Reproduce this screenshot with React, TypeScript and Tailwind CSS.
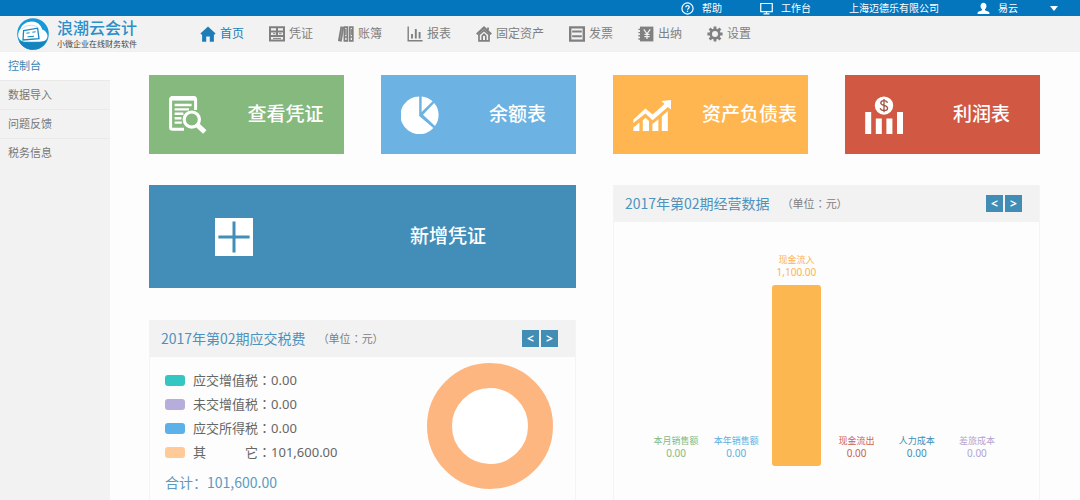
import type { ReactNode } from "react";

type IconProps = { className?: string };

const HomeIcon = ({ className }: IconProps) => (
  <svg viewBox="0 0 16 16" className={className} fill="currentColor" aria-hidden="true">
    <path d="M8 0.4 15.6 7.4 14.2 8.7 13.9 8.5V15.8H9.8V10.6H6.2V15.8H2.1V8.5L1.8 8.7 0.4 7.4Z" />
  </svg>
);

const VoucherIcon = ({ className }: IconProps) => (
  <svg viewBox="0 0 16 16" className={className} fill="none" stroke="currentColor" strokeWidth="2" aria-hidden="true">
    <path d="M1 1.2H15V14.6H1ZM1 5.4H15M1 10H15M8 1.2V9.8" />
    <path d="M4 7.7H6.4M10 7.7H12.6M4 12.4H12" strokeWidth="1" />
  </svg>
);

const BooksIcon = ({ className }: IconProps) => (
  <svg viewBox="0 0 16 16" className={className} fill="none" stroke="currentColor" strokeWidth="1.7" aria-hidden="true">
    <path d="M3.2 1.2 5.2 1.7 3 14.8 0.9 14.3Z" fill="currentColor" fillOpacity="0.6" />
    <path d="M6.4 1.2H9.4V14.8H6.4ZM11.8 1.2H14.8V14.8H11.8Z" />
    <path d="M7.9 3V9M13.3 3V9" strokeWidth="1.2" />
    <path d="M6.4 11H9.2M11.8 11H14.8" />
  </svg>
);

const ReportIcon = ({ className }: IconProps) => (
  <svg viewBox="0 0 16 16" className={className} fill="none" stroke="currentColor" aria-hidden="true">
    <path d="M1.2 0.6V14.8H15.6" strokeWidth="1.4" />
    <path d="M5 8V12.6M8.8 3V12.6M12.6 6V12.6" strokeWidth="1.9" />
  </svg>
);

const AssetIcon = ({ className }: IconProps) => (
  <svg viewBox="0 0 16 16" className={className} fill="none" stroke="currentColor" aria-hidden="true">
    <path d="M0.8 8.2 8 1.6 15.2 8.2" strokeWidth="2.2" />
    <path d="M3 8.6V14.8H13V8.6L8 4.4Z" strokeWidth="1.7" />
    <path d="M6.2 14.6V10L8 8.2 9.8 10V14.6" strokeWidth="1.6" />
    <path d="M12 1.4V4" strokeWidth="1.8" />
  </svg>
);

const InvoiceIcon = ({ className }: IconProps) => (
  <svg viewBox="0 0 16 16" className={className} fill="none" stroke="currentColor" strokeWidth="2" aria-hidden="true">
    <path d="M1.2 1.4H14.8V14.6H1.2Z" strokeWidth="2.4" />
    <path d="M3.2 5.6H12.8M3.2 10.2H12.8" />
  </svg>
);

const CashierIcon = ({ className }: IconProps) => (
  <svg viewBox="0 0 16 16" className={className} aria-hidden="true">
    <path d="M2 0.6H15.4V15.4H2Z" fill="currentColor" />
    <path d="M0.4 3.4H3M0.4 6.6H3M0.4 9.8H3M0.4 13H3" stroke="currentColor" strokeWidth="1.4" />
    <path d="M5.8 3.4 9 7.8 12.2 3.4M9 7.8V13M6.4 8.4H11.6M6.4 10.6H11.6" fill="none" stroke="#f2f2f2" strokeWidth="1.2" />
  </svg>
);

const GearIcon = ({ className }: IconProps) => (
  <svg viewBox="0 0 16 16" className={className} fill="none" stroke="currentColor" aria-hidden="true">
    <circle cx="8" cy="8" r="4.3" strokeWidth="2.6" />
    <path
      d="M8 0.4V3.2M8 12.8V15.6M0.4 8H3.2M12.8 8H15.6M2.6 2.6 4.6 4.6M11.4 11.4 13.4 13.4M2.6 13.4 4.6 11.4M11.4 4.6 13.4 2.6"
      strokeWidth="2.8"
    />
  </svg>
);

const HelpIcon = ({ className }: IconProps) => (
  <svg viewBox="0 0 14 14" className={className} fill="none" stroke="currentColor" strokeWidth="1.3" aria-hidden="true">
    <circle cx="7" cy="7" r="6" />
    <path d="M5.2 5.6C5.2 3.2 8.9 3.3 8.9 5.5 8.9 6.9 7 6.9 7 8.4M7 9.5V10.8" />
  </svg>
);

const MonitorIcon = ({ className }: IconProps) => (
  <svg viewBox="0 0 14 14" className={className} fill="none" stroke="currentColor" strokeWidth="1.3" aria-hidden="true">
    <path d="M0.8 1.6H13.2V10.4H0.8Z" />
    <path d="M7 10.4V12.4M3.8 12.8H10.2" />
  </svg>
);

const UserIcon = ({ className }: IconProps) => (
  <svg viewBox="0 0 14 14" className={className} fill="currentColor" aria-hidden="true">
    <path d="M7 0.8C9 0.8 10.2 2.2 10.2 4.2 10.2 5.8 9.5 7.2 8.6 7.9V8.9L12.6 10.4C13.3 10.8 13.4 11.6 13.4 13H0.6C0.6 11.6 0.7 10.8 1.4 10.4L5.4 8.9V7.9C4.5 7.2 3.8 5.8 3.8 4.2 3.8 2.2 5 0.8 7 0.8Z" />
  </svg>
);

const LogoMark = ({ className }: IconProps) => (
  <svg viewBox="0 0 32 32" className={className} aria-hidden="true">
    <circle cx="16" cy="16" r="15.8" fill="#169ad6" />
    <path d="M3.4 11C6 3.4 18 0.8 23 7.2 24.4 9 25 10.4 25.2 11.4 29 12.8 31 16 30.4 19 29.6 22.4 26.4 23.8 23 23.8H8C3.4 23.4 1 20.6 1.2 16.8 1.3 14.2 2.2 12.2 3.4 11Z" fill="#fff" />
    <path d="M4.6 11.4C8.6 6.6 15 6.4 20.4 8.8" fill="none" stroke="#bfe3f5" strokeWidth="1" />
    <path d="M6.6 12.6 20.6 10.2 22 20.6 6 22Z" fill="#fff" stroke="#1788c4" strokeWidth="1.3" />
    <path d="M9.4 15.2 12.6 14.7M15.4 14.2 18.6 13.8M10.6 18.8 17 18.2" stroke="#1788c4" strokeWidth="1.1" />
    <path d="M2 23.2C9 25 21 25.2 29.6 22.8 27 28.4 22 31.8 16 31.8 10 31.8 4.6 28.6 2 23.2Z" fill="#1583bd" />
  </svg>
);

const SearchDocIcon = ({ className }: IconProps) => (
  <svg viewBox="0 0 38 38" className={className} fill="none" stroke="currentColor" aria-hidden="true">
    <path d="M26.6 14V3.6Q26.6 1.6 24.6 1.6H3.6Q1.6 1.6 1.6 3.6V31.4Q1.6 33.2 3.6 33.2H15" strokeWidth="3" />
    <path d="M2 2.6H26.6" strokeWidth="4" />
    <path d="M5.6 9H22.6M5.6 13.4H20M5.6 17.8H14.4M5.6 22.2H12.4M5.6 26.6H12.8" strokeWidth="2.4" />
    <circle cx="22.8" cy="23.6" r="7.6" strokeWidth="3.2" />
    <path d="M28.6 29.2 35.8 36" strokeWidth="5" />
  </svg>
);

const PieIcon = ({ className }: IconProps) => (
  <svg viewBox="0 0 38 38" className={className} fill="currentColor" aria-hidden="true">
    <path d="M18.2 0.4V20L32.4 32A18.9 18.9 0 1 1 18.2 0.4Z" />
    <path d="M20.6 0.4A18.6 18.6 0 0 1 31.6 5.2L20.6 16Z" />
    <path d="M33.2 7A18.6 18.6 0 0 1 34 30L22 18.8Z" />
  </svg>
);

const GrowthIcon = ({ className }: IconProps) => (
  <svg viewBox="0 0 38 38" className={className} fill="currentColor" aria-hidden="true">
    <path d="M0.4 23.4 12.4 12.4 19.6 18.6 31.4 8 28.6 5 38 4V13.6L34.8 11 19.6 24.2 12.4 17.6 0.4 27Z" />
    <path d="M0.4 31.4 6.4 26.6V35H0.4ZM9.8 24.2 12.4 21.8 16 25V35H9.8ZM19.4 28 25.4 23.2V35H19.4ZM28.8 20.4 34.8 15V35H28.8Z" />
  </svg>
);

const ProfitIcon = ({ className }: IconProps) => (
  <svg viewBox="0 0 38 38" className={className} aria-hidden="true">
    <path d="M0.2 16H6.2V38H0.2ZM10.8 22.4H16.8V38H10.8ZM21.4 22.4H27.4V38H21.4ZM32 16H38V38H32Z" fill="currentColor" />
    <circle cx="19" cy="9.6" r="9.2" fill="currentColor" />
    <path
      d="M22.4 6.8C21.6 3.8 15.8 4 15.8 7 15.8 10.2 22.6 8.6 22.6 12.2 22.6 15.4 16 15.4 15.2 12.2M19 3V16.2"
      fill="none"
      stroke="#a0564a"
      strokeWidth="1.3"
    />
  </svg>
);

const navItems = [
  { label: "首页", icon: HomeIcon, active: true },
  { label: "凭证", icon: VoucherIcon },
  { label: "账簿", icon: BooksIcon },
  { label: "报表", icon: ReportIcon },
  { label: "固定资产", icon: AssetIcon },
  { label: "发票", icon: InvoiceIcon },
  { label: "出纳", icon: CashierIcon },
  { label: "设置", icon: GearIcon },
];

const sideItems = ["控制台", "数据导入", "问题反馈", "税务信息"];

const tiles = [
  { label: "查看凭证", icon: SearchDocIcon, color: "bg-[#86b97e]" },
  { label: "余额表", icon: PieIcon, color: "bg-[#6cb2e2]" },
  { label: "资产负债表", icon: GrowthIcon, color: "bg-[#ffb650]" },
  { label: "利润表", icon: ProfitIcon, color: "bg-[#d15843]" },
];

const taxes = [
  { label: "应交增值税", value: "0.00", color: "bg-[#34c6c2]" },
  { label: "未交增值税", value: "0.00", color: "bg-[#b6addb]" },
  { label: "应交所得税", value: "0.00", color: "bg-[#5cb1e8]" },
  { label: "其\u3000\u3000\u3000它", value: "101,600.00", color: "bg-[#ffca98]" },
];

const bars = [
  { label: "本月销售额", value: 0, text: "text-[#86b97e]", bar: "bg-[#86b97e]" },
  { label: "本年销售额", value: 0, text: "text-[#62aede]", bar: "bg-[#62aede]" },
  { label: "现金流入", value: 1100, text: "text-[#fbb450]", bar: "bg-[#fdb751]" },
  { label: "现金流出", value: 0, text: "text-[#cf5f4c]", bar: "bg-[#cf5f4c]" },
  { label: "人力成本", value: 0, text: "text-[#3f8db6]", bar: "bg-[#3f8db6]" },
  { label: "差旅成本", value: 0, text: "text-[#b3a6d0]", bar: "bg-[#b3a6d0]" },
];

const maxBarHeight = 181;
const maxValue = Math.max(...bars.map((b) => b.value));

const formatMoney = (n: number) =>
  n.toLocaleString("en-US", { minimumFractionDigits: 2, maximumFractionDigits: 2 });

// Full-width colon, vertically and horizontally centred in its cell
const Colon = () => <span className="font-['Noto_Sans_CJK_TC',sans-serif]">：</span>;

const TopBar = () => (
  <div className="flex h-4 items-center justify-end gap-[38px] bg-[#0476bd] pr-[22px] text-[10px] leading-4 text-white">
    <a href="#help" className="flex items-center gap-2">
      <HelpIcon className="size-[13px]" />
      帮助
    </a>
    <a href="#workbench" className="flex items-center gap-2">
      <MonitorIcon className="size-[13px]" />
      工作台
    </a>
    <span>上海迈德乐有限公司</span>
    <button type="button" className="flex items-center gap-2">
      <UserIcon className="size-[13px]" />
      易云
      <svg viewBox="0 0 8 5" className="ml-6 w-2" fill="currentColor" aria-hidden="true">
        <path d="M0 0H8L4 5Z" />
      </svg>
    </button>
  </div>
);

const Header = () => (
  <header className="flex h-9 items-center border-b border-[#f0f0f0] bg-[#f2f2f2]">
    <a href="#home" className="flex w-[200px] shrink-0 items-center gap-2 pl-[17px]">
      <LogoMark className="size-8" />
      <span className="flex flex-col">
        <span className="text-[16px] leading-5 font-medium text-[#2d8fc9]">浪潮云会计</span>
        <span className="text-[8px] leading-3 text-[#444]">小微企业在线财务软件</span>
      </span>
    </a>
    <nav className="flex gap-[25px] text-xs">
      {navItems.map(({ label, icon: Icon, active }) => (
        <a
          key={label}
          href="#nav"
          className={`flex items-center gap-1 whitespace-nowrap ${active ? "text-[#1c7db9]" : "text-[#808080]"}`}
        >
          <Icon className="size-4" />
          {label}
        </a>
      ))}
    </nav>
  </header>
);

const Sidebar = () => (
  <aside className="w-[110px] shrink-0 bg-[#f2f2f2]">
    <ul className="text-[11px]">
      {sideItems.map((item, i) => (
        <li key={item} className={`border-b border-[#e9e9e9] last:border-b-0 ${i === 0 ? "bg-[#fdfdfd]" : ""}`}>
          <a href="#side" className={`flex h-7 items-center px-2 ${i === 0 ? "text-[#3a86b5]" : "text-[#777]"}`}>
            {item}
          </a>
        </li>
      ))}
    </ul>
  </aside>
);

const Panel = ({ title, children }: { title: string; children: ReactNode }) => (
  <section className="flex flex-1 flex-col border-x border-[#f4f4f4]">
    <div className="flex h-[37px] shrink-0 items-center bg-[#f2f2f2] pr-[17px] pl-[11px]">
      <h2 className="font-['Noto_Sans_CJK_SC',sans-serif] text-[14px] text-[#4e93bd]">{title}</h2>
      <span className="ml-3 text-[11px] text-[#808080]">
        （单位
        <Colon />
        元）
      </span>
      <div className="ml-auto flex gap-[2px] text-xs leading-none font-bold text-white">
        <button type="button" aria-label="上一期" className="size-[17px] bg-[#418db5]">
          &lt;
        </button>
        <button type="button" aria-label="下一期" className="size-[17px] bg-[#418db5]">
          &gt;
        </button>
      </div>
    </div>
    {children}
  </section>
);

const TaxPanel = () => (
  <Panel title="2017年第02期应交税费">
    <div className="flex flex-1 items-start justify-between pr-[22px] pl-[15px]">
      <div className="pt-[11px]">
        <ul className="text-[13px] leading-6 text-[#666]">
          {taxes.map((tax) => (
            <li key={tax.label} className="flex items-center">
              <span className={`mr-2 h-[11px] w-5 rounded-[3px] ${tax.color}`} />
              {tax.label}
              <Colon />
              {tax.value}
            </li>
          ))}
        </ul>
        <p className="mt-[6px] font-['Noto_Sans_CJK_SC',sans-serif] text-[14px] leading-6 text-[#5b9ac0]">
          合计：101,600.00
        </p>
      </div>
      <svg viewBox="0 0 126 126" className="mt-[6px] size-[126px]" role="img" aria-label="应交税费构成">
        <circle cx="63" cy="63" r="50.5" fill="#fff" stroke="#feb680" strokeWidth="25" />
      </svg>
    </div>
  </Panel>
);

const BusinessPanel = () => (
  <Panel title="2017年第02期经营数据">
    <div className="grid flex-1 grid-cols-6 items-end px-8 pb-[34px]">
      {bars.map((b) => (
        <div key={b.label} className={`flex flex-col items-center leading-3 ${b.text}`}>
          <span className="text-[9px] whitespace-nowrap">{b.label}</span>
          <span className="mb-[7px] text-[10px]">{formatMoney(b.value)}</span>
          <div
            className={`w-[49px] rounded-[3px] ${b.bar}`}
            style={{ height: (b.value / maxValue) * maxBarHeight }}
          />
        </div>
      ))}
    </div>
  </Panel>
);

const App = () => {
  return (
    <div className="flex min-h-screen flex-col bg-[#fdfdfd] font-['Noto_Sans','Noto_Sans_CJK_SC',sans-serif]">
      <TopBar />
      <Header />
      <div className="flex flex-1">
        <Sidebar />
        <main className="flex flex-1 flex-col gap-[31px] pt-[23px] pr-10 pl-[39px]">
          <div className="grid grid-cols-4 gap-[37px]">
            {tiles.map(({ label, icon: Icon, color }) => (
              <a key={label} href="#report" className={`flex h-[79px] items-center text-white ${color}`}>
                <Icon className="mx-5 size-[38px] shrink-0" />
                <span className="flex-1 text-center text-[19px] font-medium whitespace-nowrap">{label}</span>
              </a>
            ))}
          </div>
          <div className="grid flex-1 grid-cols-2 gap-[37px]">
            <div className="flex flex-col gap-8">
              <button type="button" className="flex h-[103px] items-center bg-[#428eb8] text-white">
                <span className="flex w-2/5 justify-center">
                  <svg viewBox="0 0 38 38" className="size-[38px]" aria-hidden="true">
                    <path d="M0 0H38V38H0Z" fill="#fff" />
                    <path d="M19 3.4V34.6M3.4 19H34.6" stroke="#428eb8" strokeWidth="3" />
                  </svg>
                </span>
                <span className="w-3/5 text-center text-[19px] font-medium">新增凭证</span>
              </button>
              <TaxPanel />
            </div>
            <div className="flex flex-col">
              <BusinessPanel />
            </div>
          </div>
        </main>
      </div>
    </div>
  );
};

export default App;
